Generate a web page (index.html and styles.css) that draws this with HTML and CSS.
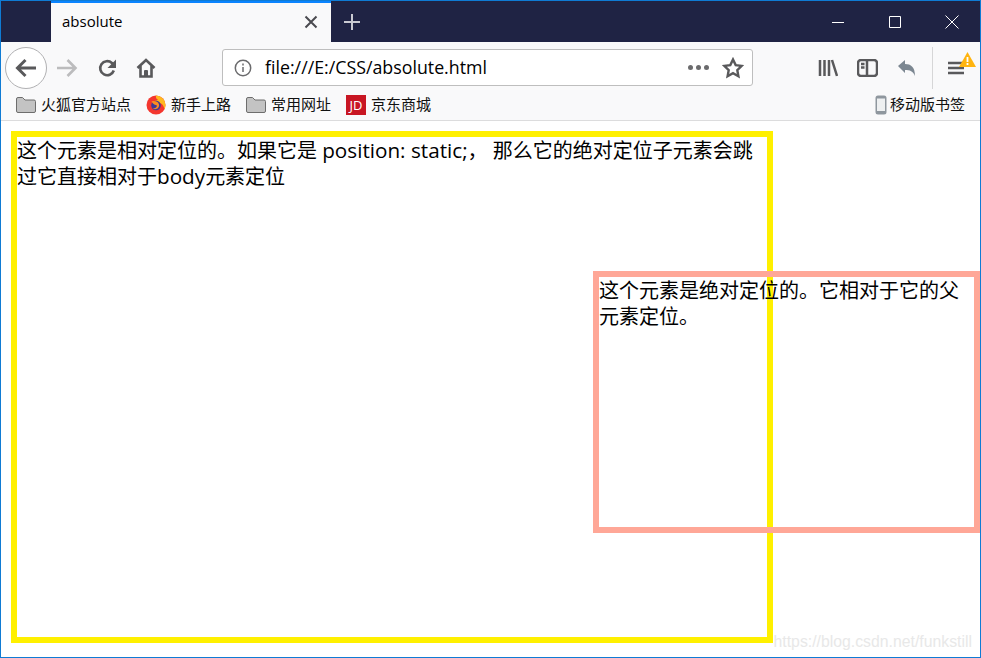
FILE: index.html
```html
<!DOCTYPE html>
<html lang="zh-CN">
<head>
    <meta charset="UTF-8">
    <meta name="viewport" content="width=device-width, initial-scale=1.0">
    <title>absolute</title>
    <link rel="stylesheet" href="styles.css">
</head>
<body>
    <div class="window">
        <header class="tabbar">
            <div class="tab">
                <span class="tab-title">absolute</span>
                <svg class="tab-close" width="14" height="14" viewBox="0 0 14 14"><path d="M1.500 1.500l11 11M12.500 1.500l-11 11"/></svg>
            </div>
            <svg class="tab-new" width="18" height="18" viewBox="0 0 18 18"><path d="M9 1v16M1 9h16"/></svg>
            <div class="win-controls">
                <svg width="14" height="14" viewBox="0 0 14 14"><path d="M1 7.500h12"/></svg>
                <svg width="14" height="14" viewBox="0 0 14 14"><path d="M1.500 1.500h11v11h-11z"/></svg>
                <svg width="14" height="14" viewBox="0 0 14 14"><path d="M.5.5l13 13M13.500.5l-13 13"/></svg>
            </div>
        </header>

        <nav class="toolbar">
            <div class="nav-buttons">
                <div class="back">
                    <svg width="22" height="20" viewBox="0 0 22 20"><path d="M21 10H3M10.500 2L2.500 10l8 8"/></svg>
                </div>
                <svg class="forward" width="22" height="20" viewBox="0 0 22 20"><path d="M1 10h18M11.500 2l8 8-8 8"/></svg>
                <svg class="reload" width="20" height="20" viewBox="0 0 20 20"><path d="M16.800 12.500a7 7 0 1 1-1.900-7.500L17 7"/><path class="fill" d="M19 1.500V10h-8.500z"/></svg>
                <svg class="home" width="20" height="20" viewBox="0 0 20 20"><path d="M1.500 10L10 2l8.500 8M4.500 8v10.500h11V8"/><path class="fill" d="M8 18.500V13a1 1 0 0 1 1-1h2a1 1 0 0 1 1 1v5.500z"/></svg>
            </div>
            <div class="urlbar">
                <svg class="info" width="18" height="18" viewBox="0 0 18 18"><circle cx="9" cy="9" r="7.700"/><path d="M9 8v5M9 4.500v2"/></svg>
                <span class="url">file:///E:/CSS/absolute.html</span>
                <span class="dots"><i></i><i></i><i></i></span>
                <svg class="star" width="22" height="22" viewBox="0 0 22 22"><path d="M11 2.500l2.700 5.600 6 .8-4.400 4.200 1.100 6.100-5.400-3-5.400 3 1.100-6.100L2.300 8.900l6-.8z"/></svg>
            </div>
            <div class="tools">
                <svg width="20" height="20" viewBox="0 0 20 20"><path d="M2 2v16M6.500 2v16M11 2v16M14 2l5 16"/></svg>
                <svg width="21" height="18" viewBox="0 0 21 18"><rect x="1" y="1" width="19" height="16" rx="3"/><path d="M10 1v16M4 5h3.500M4 8.500h3.500"/></svg>
                <svg class="undo" width="20" height="18" viewBox="0 0 20 18"><path d="M1 7l7-6v4c6 0 10 3 10 12-2-5-5-6-10-6v3z"/></svg>
                <div class="menu">
                    <svg width="16" height="14" viewBox="0 0 16 14"><path d="M0 2h16M0 7h16M0 12h16"/></svg>
                    <svg class="warn" width="17" height="15" viewBox="0 0 17 15"><path d="M8.500 0L17 15H0z"/><path class="mark" d="M8.500 5v5M8.500 11v2"/></svg>
                </div>
            </div>
        </nav>

        <div class="bookmarks">
            <a class="bookmark"><svg class="folder" width="20" height="16" viewBox="0 0 20 16"><path d="M.5 14V2a1.500 1.500 0 0 1 1.500-1.500h4.500L9 3h9a1.500 1.500 0 0 1 1.500 1.500V14a1.500 1.500 0 0 1-1.500 1.500H2A1.500 1.500 0 0 1 .5 14z"/></svg><span class="label">火狐官方站点</span></a>
            <a class="bookmark"><svg class="flat" width="20" height="20" viewBox="0 0 20 20"><circle cx="10" cy="10" r="9.500" fill="#f4362e"/><path d="M10 .5a9.500 9.500 0 0 1 9.500 9.500c0 1.500-.4 3-1 4.200C17.500 9.500 15 7.500 11 7.500c-1.500 0-2.500-1-2-2 1.200.5 2.500 0 2.800-1C10.500 4.300 9.500 2.500 10 .5z" fill="#ffb81f"/><circle cx="10" cy="10.500" r="4.800" fill="#3f3a94"/><path d="M5.500 6.500C8 5.500 12 6 13 9.500c.7 3.500-3 6-6.500 4 2 .2 4.500-.7 4.500-3C9.500 10 7 9.500 5.500 6.500z" fill="#ff8b1f"/></svg><span class="label">新手上路</span></a>
            <a class="bookmark"><svg class="folder" width="20" height="16" viewBox="0 0 20 16"><path d="M.5 14V2a1.500 1.500 0 0 1 1.500-1.500h4.500L9 3h9a1.500 1.500 0 0 1 1.500 1.500V14a1.500 1.500 0 0 1-1.500 1.500H2A1.500 1.500 0 0 1 .5 14z"/></svg><span class="label">常用网址</span></a>
            <a class="bookmark"><span class="jd">JD</span><span class="label">京东商城</span></a>
            <a class="bookmark mobile"><svg class="flat" width="12" height="20" viewBox="0 0 12 20"><rect x=".5" y=".5" width="11" height="19" rx="2.500" fill="#8f979e"/><rect x="2" y="3.500" width="8" height="12.500" fill="#eef0f1"/></svg><span class="label">移动版书签</span></a>
        </div>

        <main class="content">
            <div class="relative-box">
                这个元素是相对定位的。如果它是 <span class="latin">position: static;</span>， 那么它的绝对定位子元素会跳过它直接相对于<span class="latin">body</span>元素定位
                <div class="absolute-box">这个元素是绝对定位的。它相对于它的父元素定位。</div>
            </div>
            <span class="watermark">https://blog.csdn.net/funkstill</span>
        </main>
    </div>
</body>
</html>
```

FILE: styles.css
```css
* {
    margin: 0;
    padding: 0;
    box-sizing: border-box;
}

html, body {
    height: 100%;
    overflow: hidden;
}

body {
    font-family: "Open Sans", "Noto Sans CJK SC", sans-serif;
    color: #000;
    background-color: #fff;
}

svg {
    display: block;
    flex: none;
    fill: none;
    stroke: #59595b;
    stroke-width: 2;
}

.window {
    display: flex;
    flex-direction: column;
    height: 658px;
    border: 1px solid #0f7bd4;
}

/* tabs */
.tabbar {
    display: flex;
    align-items: center;
    height: 41px;
    padding-left: 50px;
    background-color: #1f2344;
}

.tab {
    display: flex;
    align-items: center;
    justify-content: space-between;
    align-self: stretch;
    width: 280px;
    padding: 0 13px 1px 11px;
    background-color: #f9f9fa;
    border-top: 2px solid #0a84ff;
}

.tab-title {
    margin-bottom: 2px;
    font-size: 15px;
}

.tab-close {
    stroke: #4a4a4f;
    stroke-width: 2;
}

.tab-new {
    margin-left: 12px;
    stroke: #c9cad2;
}

.win-controls {
    display: flex;
    gap: 43px;
    margin: 0 21px 0 auto;
}

.win-controls svg {
    stroke: #fff;
    stroke-width: 1;
}

/* toolbar */
.toolbar {
    display: flex;
    align-items: center;
    height: 48px;
    padding-top: 3px;
    background-color: #f9f9fa;
}

.nav-buttons {
    display: flex;
    align-items: center;
    width: 221px;
    padding-left: 4px;
}

.back {
    display: flex;
    align-items: center;
    justify-content: center;
    width: 42px;
    height: 42px;
    border: 1px solid #b1b1b3;
    border-radius: 50%;
    background-color: #fff;
}

.back svg {
    stroke-width: 3;
}

.forward {
    margin-left: 9px;
    stroke: #bcbcbd;
    stroke-width: 2.600;
}

.reload {
    margin-left: 19px;
    stroke-width: 2.600;
}

.fill {
    fill: #59595b;
    stroke: none;
}

.home {
    margin-left: 19px;
    stroke-width: 2.600;
}

.urlbar {
    display: flex;
    align-items: center;
    width: 531px;
    height: 37px;
    padding: 0 8px 0 11px;
    background-color: #fff;
    border: 1px solid #bebebe;
    border-radius: 3px;
}

.info {
    stroke: #6b6b6d;
    stroke-width: 1.500;
}

.url {
    margin: 0 0 2px 13px;
    font-size: 17.800px;
}

.dots {
    display: flex;
    gap: 3px;
    margin-left: auto;
}

.dots i {
    width: 5px;
    height: 5px;
    border-radius: 50%;
    background-color: #6b6b6d;
}

.star {
    margin-left: 13px;
    stroke-width: 2.400;
}

.tools {
    display: flex;
    align-items: center;
    flex: 1;
    gap: 19px;
    height: 42px;
    padding-left: 65px;
}

.tools svg {
    stroke-width: 2.500;
}

.tools .undo {
    fill: #7c8791;
    stroke: none;
}

.menu {
    position: relative;
    display: flex;
    align-items: center;
    align-self: stretch;
    margin-left: -4px;
    padding-left: 15px;
    border-left: 1px solid #d6d6d7;
}

.tools .warn {
    position: absolute;
    top: 5px;
    left: 26px;
    fill: #ffb40f;
    stroke: none;
}

.tools .warn .mark {
    stroke: #fff;
    stroke-width: 1.800;
}

/* bookmarks */
.bookmarks {
    display: flex;
    align-items: center;
    gap: 15px;
    height: 31px;
    padding: 0 15px;
    background-color: #f9f9fa;
    border-bottom: 1px solid #dcdcdd;
}

.bookmark {
    display: flex;
    align-items: center;
    gap: 5px;
    font-size: 15px;
    color: #111;
}

.label {
    margin-bottom: 3px;
}

.folder {
    fill: #c3c3c3;
    stroke: #6d6d6d;
    stroke-width: 1;
}

.flat {
    stroke: none;
}

.jd {
    display: flex;
    align-items: center;
    justify-content: center;
    width: 20px;
    height: 20px;
    font-size: 13px;
    color: #fff;
    background-color: #c81623;
}

.mobile {
    margin-left: auto;
    gap: 3px;
}

/* page */
.content {
    position: relative;
    flex: 1;
    padding: 10px;
    background-color: #fff;
}

.relative-box {
    position: relative;
    width: 762px;
    height: 512px;
    padding-top: 1px;
    border: 6px solid #fff000;
    font-size: 20px;
    line-height: 26px;
}

.latin {
    font-size: 20.700px;
    line-height: 1;
}

.absolute-box {
    position: absolute;
    top: 134px;
    left: 576px;
    width: 387px;
    height: 262px;
    padding-top: 1px;
    border: 6px solid #ffa797;
}

.watermark {
    position: absolute;
    right: 8px;
    bottom: 6px;
    font-family: "Liberation Sans", sans-serif;
    font-size: 15.800px;
    color: #e8e8e8;
}
```
